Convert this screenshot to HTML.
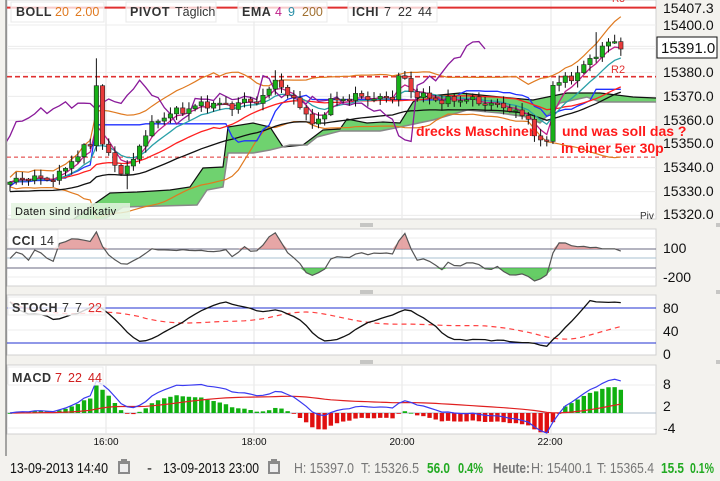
<!DOCTYPE html>
<html><head><meta charset="utf-8">
<style>
html,body{margin:0;padding:0;background:#f3f2ee;}
body{width:720px;height:476px;overflow:hidden;font-family:"Liberation Sans",sans-serif;}
svg text{font-family:"Liberation Sans",sans-serif;}
</style></head>
<body>
<svg id="s" width="720" height="476" viewBox="0 0 720 476" xmlns="http://www.w3.org/2000/svg">
<rect x="0" y="0" width="720" height="476" fill="#f3f2ee"/>
<rect x="7" y="0" width="649" height="219" fill="#fff" stroke="#d0d0d0"/>
<rect x="7" y="229" width="649" height="57" fill="#fff" stroke="#d0d0d0"/>
<rect x="7" y="295" width="649" height="60" fill="#fff" stroke="#d0d0d0"/>
<rect x="7" y="365" width="649" height="69" fill="#fff" stroke="#d0d0d0"/>
<line x1="6" y1="0" x2="6" y2="456" stroke="#555" stroke-width="1"/>
<g id="grid"></g>
<g id="main"></g>
<g id="ind"></g>
<g stroke="#999" stroke-width="1">
<line x1="360" y1="224" x2="373" y2="224"/><line x1="360" y1="226" x2="373" y2="226"/>
<line x1="360" y1="291" x2="373" y2="291"/><line x1="360" y1="293" x2="373" y2="293"/>
<line x1="360" y1="361" x2="373" y2="361"/><line x1="360" y1="363" x2="373" y2="363"/>
<line x1="716" y1="224" x2="720" y2="224"/><line x1="716" y1="226" x2="720" y2="226"/>
<line x1="716" y1="291" x2="720" y2="291"/><line x1="716" y1="293" x2="720" y2="293"/>
<line x1="716" y1="361" x2="720" y2="361"/><line x1="716" y1="363" x2="720" y2="363"/>
</g>
<g font-size="12.5">
<rect x="11" y="2" width="93" height="20" fill="#fff" fill-opacity="0.75" stroke="#e8e8e8"/>
<text x="16" y="16" font-weight="bold" fill="#333" letter-spacing="0.5">BOLL</text><text x="55" y="16" fill="#e07a20">20</text><text x="75" y="16" fill="#e07a20">2.00</text>
<rect x="126" y="2" width="90" height="20" fill="#fff" fill-opacity="0.75" stroke="#e8e8e8"/>
<text x="130" y="16" font-weight="bold" fill="#333" letter-spacing="0.5">PIVOT</text><text x="175" y="16" fill="#333">Täglich</text>
<rect x="238" y="2" width="89" height="20" fill="#fff" fill-opacity="0.75" stroke="#e8e8e8"/>
<text x="242" y="16" font-weight="bold" fill="#333" letter-spacing="0.5">EMA</text><text x="275" y="16" fill="#c0208a">4</text><text x="288" y="16" fill="#2a90a8">9</text><text x="302" y="16" fill="#a07030">200</text>
<rect x="348" y="2" width="89" height="20" fill="#fff" fill-opacity="0.75" stroke="#e8e8e8"/>
<text x="352" y="16" font-weight="bold" fill="#333" letter-spacing="0.5">ICHI</text><text x="384" y="16" fill="#333">7</text><text x="398" y="16" fill="#333">22</text><text x="418" y="16" fill="#333">44</text>
</g>
<text x="612" y="2" font-size="10" fill="#e03030">R3</text>
<text x="611" y="73" font-size="11" fill="#e03030">R2</text>
<text x="640" y="219" font-size="10" fill="#333">Piv</text>
<g font-size="14" font-weight="bold" fill="#ff1a1a">
<text x="416" y="136">drecks Maschinen</text>
<text x="562" y="136">und was soll das ?</text>
<text x="561" y="153">in einer 5er 30p</text>
</g>
<g font-size="12.5">
<rect x="8" y="230" width="50" height="18" fill="#fff" fill-opacity="0.8" stroke="#ececec"/>
<text x="12" y="245" font-weight="bold" fill="#333" letter-spacing="0.5">CCI</text><text x="40" y="245" fill="#333">14</text>
<rect x="8" y="297" width="97" height="18" fill="#fff" fill-opacity="0.8" stroke="#ececec"/>
<text x="12" y="312" font-weight="bold" fill="#333" letter-spacing="0.5">STOCH</text><text x="62" y="312" fill="#333">7</text><text x="75" y="312" fill="#333">7</text><text x="88" y="312" fill="#e03030">22</text>
<rect x="8" y="367" width="95" height="18" fill="#fff" fill-opacity="0.8" stroke="#ececec"/>
<text x="12" y="382" font-weight="bold" fill="#333" letter-spacing="0.5">MACD</text><text x="55" y="382" fill="#d02020">7</text><text x="68" y="382" fill="#d02020">22</text><text x="88" y="382" fill="#d02020">44</text>
</g>
<g font-size="14" fill="#111">
<text x="663" y="13">15407.3</text>
<text x="663" y="30">15400.0</text>
<text x="663" y="77">15380.0</text>
<text x="663" y="101">15370.0</text>
<text x="663" y="125">15360.0</text>
<text x="663" y="148">15350.0</text>
<text x="663" y="172">15340.0</text>
<text x="663" y="196">15330.0</text>
<text x="663" y="219">15320.0</text>
<text x="663" y="253">100</text>
<text x="663" y="282">-200</text>
<text x="663" y="313">80</text>
<text x="663" y="336">40</text>
<text x="663" y="359">0</text>
<text x="663" y="389">8</text>
<text x="663" y="411">2</text>
<text x="663" y="433">-4</text>
</g>
<rect x="657" y="37" width="60" height="21" fill="#fff" stroke="#111"/>
<text x="661" y="53" font-size="15" fill="#111">15391.0</text>
<g font-size="10" fill="#111" text-anchor="middle">
<text x="106" y="445">16:00</text><text x="254" y="445">18:00</text><text x="402" y="445">20:00</text><text x="550" y="445">22:00</text>
</g>
<g font-size="15" fill="#111">
<text x="10" y="473" textLength="98" lengthAdjust="spacingAndGlyphs">13-09-2013 14:40</text>
<text x="147" y="473">-</text>
<text x="163" y="473" textLength="96" lengthAdjust="spacingAndGlyphs">13-09-2013 23:00</text>
<text x="294" y="473" fill="#777" textLength="60" lengthAdjust="spacingAndGlyphs">H: 15397.0</text>
<text x="361" y="473" fill="#777" textLength="58" lengthAdjust="spacingAndGlyphs">T: 15326.5</text>
<text x="427" y="473" fill="#22aa22" font-weight="bold" textLength="23" lengthAdjust="spacingAndGlyphs">56.0</text>
<text x="458" y="473" fill="#22aa22" font-weight="bold" textLength="25" lengthAdjust="spacingAndGlyphs">0.4%</text>
<text x="493" y="473" fill="#777" font-weight="bold" textLength="37" lengthAdjust="spacingAndGlyphs">Heute:</text>
<text x="531" y="473" fill="#777" textLength="61" lengthAdjust="spacingAndGlyphs">H: 15400.1</text>
<text x="597" y="473" fill="#777" textLength="57" lengthAdjust="spacingAndGlyphs">T: 15365.4</text>
<text x="661" y="473" fill="#22aa22" font-weight="bold" textLength="23" lengthAdjust="spacingAndGlyphs">15.5</text>
<text x="690" y="473" fill="#22aa22" font-weight="bold" textLength="24" lengthAdjust="spacingAndGlyphs">0.1%</text>
</g>
<g fill="#8a8a8a">
<rect x="118" y="461" width="12" height="13"/><rect x="120" y="464" width="8" height="8" fill="#eee"/><rect x="121" y="459" width="6" height="3"/>
<rect x="268" y="461" width="12" height="13"/><rect x="270" y="464" width="8" height="8" fill="#eee"/><rect x="271" y="459" width="6" height="3"/>
</g>
<g id="top"></g>
</svg>
<script>
(function(){
var NS="http://www.w3.org/2000/svg";
function el(p,t,a){var e=document.createElementNS(NS,t);for(var k in a)e.setAttribute(k,a[k]);p.appendChild(e);return e;}
var grid=document.getElementById('grid'),main=document.getElementById('main'),ind=document.getElementById('ind');
[106,254,402,551].forEach(function(x){
 [[0,219],[229,286],[295,355],[365,434]].forEach(function(r){el(grid,'line',{x1:x,y1:r[0],x2:x,y2:r[1],stroke:'#e4e4e4'});});
});
function yP(p){return 25+(15400-p)*2.38;}
for(var p=15320;p<=15400;p+=10){el(grid,'line',{x1:7,y1:yP(p),x2:656,y2:yP(p),stroke:'#ececec'});}
el(grid,'line',{x1:7,y1:yP(15391),x2:656,y2:yP(15391),stroke:'#ececec'});
[238,277,330,385,428].forEach(function(y){el(grid,'line',{x1:7,y1:y,x2:656,y2:y,stroke:'#ececec'});});
var kp=[[0,15334],[3,15336],[6,15335],[8,15337],[10,15343],[12,15348],[13,15350],[14,15375],[15,15350],[16,15345],[17,15342],[18,15338],[19,15340],[20,15343],[21,15350],[23,15358],[24,15360],[26,15363],[28,15364],[30,15366],[33,15367],[36,15366],[38,15368],[40,15368],[42,15372],[43,15378],[44,15374],[45,15370],[47,15367],[48,15362],[49,15358],[50,15360],[52,15368],[56,15370],[60,15369],[62,15370],[63,15378],[64,15377],[65,15372],[67,15370],[70,15368],[74,15369],[77,15367],[80,15366],[82,15363],[84,15361],[85,15354],[86,15350],[87,15352],[88,15375],[89,15376],[91,15378],[92,15380],[93,15383],[94,15385],[95,15388],[96,15391],[98,15393],[99,15391]];
var N=100,C=[];
for(var i=0;i<N;i++){for(var j=0;j<kp.length-1;j++){if(i>=kp[j][0]&&i<=kp[j+1][0]){var t=(i-kp[j][0])/(kp[j+1][0]-kp[j][0]||1);C[i]=kp[j][1]+t*(kp[j+1][1]-kp[j][1]);break;}}
 C[i]+=Math.sin(i*1.7)*1.1+Math.sin(i*3.3)*0.7;}
var O=[],H=[],L=[];
for(i=0;i<N;i++){O[i]=i?C[i-1]:C[0]-1;var r1=Math.abs(Math.sin(i*2.1))*2.5+0.4,r2=Math.abs(Math.cos(i*1.3))*2.5+0.4;H[i]=Math.max(O[i],C[i])+r1;L[i]=Math.min(O[i],C[i])-r2;}
H[14]=15386;H[95]=15397;L[86]=15349;L[87]=15349;L[19]=15331;H[43]=15381;
function X(i){return 10+i*6.17;}
function line(arr,col,w,dash,g,yf,st){var d='',m=false;for(var i=0;i<arr.length;i++){if(arr[i]==null||isNaN(arr[i])){m=false;continue;}d+=(m?'L':'M')+X(i+(st||0)).toFixed(1)+' '+yf(arr[i]).toFixed(1);m=true;}var a={d:d,fill:'none',stroke:col,'stroke-width':w||1.2};if(dash)a['stroke-dasharray']=dash;el(g,'path',a);}
function ema(a,n){var k=2/(n+1),r=[],v=a[0];for(var i=0;i<a.length;i++){v=i?a[i]*k+v*(1-k):a[0];r[i]=v;}return r;}
function sma(a,n){var r=[];for(var i=0;i<a.length;i++){var s=0,c=0;for(var j=Math.max(0,i-n+1);j<=i;j++){s+=a[j];c++;}r[i]=s/c;}return r;}
function hl(n,i){var h=-1e9,l=1e9;for(var j=Math.max(0,i-n+1);j<=i;j++){h=Math.max(h,H[j]);l=Math.min(l,L[j]);}return[h,l];}
var cp=el(main,'clipPath',{id:'cm'});el(cp,'rect',{x:7,y:0,width:649,height:219});
var g=el(main,'g',{'clip-path':'url(#cm)'});
var kij=[];for(i=0;i<N;i++){var b=hl(22,i);kij[i]=(b[0]+b[1])/2;}
// hand-drawn cloud
var top=[[70,222],[90,207],[110,193],[137,192],[170,190],[190,187],[203,168],[223,167],[228,127],[253,123],[270,127],[283,147],[303,145],[323,130],[340,129],[347,119],[367,123],[383,122],[400,123],[413,102],[420,97],[460,93],[500,97],[533,100],[567,93],[600,93],[633,97],[656,98]];
var bot=[[656,102],[600,102],[587,97],[560,103],[540,123],[527,117],[500,113],[467,110],[433,120],[400,127],[380,131],[340,131],[317,137],[307,145],[290,145],[270,150],[253,153],[228,153],[223,187],[207,190],[197,205],[123,207],[100,222]];
function pth(a){return a.map(function(p,i){return (i?'L':'M')+p[0]+' '+p[1];}).join('');}
el(g,'path',{d:pth(top)+pth(bot).replace('M','L')+'Z',fill:'#6fd26f'});
el(g,'path',{d:pth(top),fill:'none',stroke:'#111','stroke-width':1.2});
el(g,'path',{d:pth(bot),fill:'none',stroke:'#888','stroke-width':1.5});
el(g,'line',{x1:7,y1:yP(15407.3),x2:656,y2:yP(15407.3),stroke:'#e03030','stroke-width':2});
el(g,'line',{x1:7,y1:yP(15378.3),x2:656,y2:yP(15378.3),stroke:'#e03030','stroke-width':1.6,'stroke-dasharray':'5 3'});
el(g,'line',{x1:7,y1:yP(15344.5),x2:656,y2:yP(15344.5),stroke:'#e03030','stroke-width':1,'stroke-dasharray':'4 3'});
var bm=sma(C,20),bu=[],bl=[];
for(i=0;i<N;i++){var s=0,c2=0;for(j=Math.max(0,i-19);j<=i;j++){s+=(C[j]-bm[i])*(C[j]-bm[i]);c2++;}var sd=Math.sqrt(s/c2);bu[i]=bm[i]+2*sd+2;bl[i]=bm[i]-2*sd-2;}
line(bu,'#e07a20',1.2,null,g,yP);line(bl,'#e07a20',1.2,null,g,yP);
line(ema(C,30).map(function(v,i){return v-4;}),'#111',1.3,null,g,yP);
line(kij,'#2030ff',1.3,null,g,yP);
line(bm,'#ff2020',1.3,null,g,yP);
line(ema(C,9),'#2aa0a8',1.3,null,g,yP);
line(ema(C,4),'#c0208a',1.3,null,g,yP);
line(C.slice(0),'#8a1a9a',1.3,null,g,yP,-22);
for(i=0;i<N;i++){var x=X(i);el(g,'line',{x1:x,y1:yP(H[i]),x2:x,y2:yP(L[i]),stroke:'#111','stroke-width':1});
 var t1=yP(Math.max(O[i],C[i])),t2=yP(Math.min(O[i],C[i]));var hh=Math.max(1.5,t2-t1);
 el(g,'rect',{x:x-2.2,y:t1,width:4.4,height:hh,fill:C[i]>=O[i]?'#18b018':'#e83a3a',stroke:'#222','stroke-width':0.6});}
var tp=[];for(i=0;i<N;i++)tp[i]=(H[i]+L[i]+C[i])/3;var tm=sma(tp,14),cci=[];
for(i=0;i<N;i++){var md=0,c3=0;for(j=Math.max(0,i-13);j<=i;j++){md+=Math.abs(tp[j]-tm[i]);c3++;}md/=c3;cci[i]=md?(tp[i]-tm[i])/(0.015*md):0;}
function yC(v){return Math.max(230,Math.min(285,258.5-v*0.095));}
var c4=el(ind,'g',{});
el(c4,'line',{x1:7,y1:249,x2:656,y2:249,stroke:'#6a6a80'});el(c4,'line',{x1:7,y1:258,x2:656,y2:258,stroke:'#aac0d0'});el(c4,'line',{x1:7,y1:268,x2:656,y2:268,stroke:'#6a6a80'});
var dp='M'+X(0)+' 249',dn='M'+X(0)+' 268';for(i=0;i<N;i++){dp+='L'+X(i).toFixed(1)+' '+Math.min(249,yC(cci[i])).toFixed(1);dn+='L'+X(i).toFixed(1)+' '+Math.max(268,yC(cci[i])).toFixed(1);}
el(c4,'path',{d:dp+'L'+X(N-1)+' 249Z',fill:'#e09090','fill-opacity':0.8});el(c4,'path',{d:dn+'L'+X(N-1)+' 268Z',fill:'#40c040','fill-opacity':0.8});
line(cci,'#555',1.2,null,c4,yC);
var k=[];for(i=0;i<N;i++){var q=hl(14,i);k[i]=q[0]>q[1]?(C[i]-q[1])/(q[0]-q[1])*100:50;}
k=sma(k,7);var ds=sma(k,22);function yS(v){return 354.7-v*0.583;}
el(ind,'line',{x1:7,y1:308,x2:656,y2:308,stroke:'#2030d0'});el(ind,'line',{x1:7,y1:343,x2:656,y2:343,stroke:'#2030d0'});
line(ds,'#ff4040',1.2,'5 4',ind,yS);line(k,'#111',1.3,null,ind,yS);
var m1=ema(C,7),m2=ema(C,22),mc=[],sg;for(i=0;i<N;i++)mc[i]=(m1[i]-m2[i])*0.9;sg=ema(mc,44);
function yM(v){return Math.max(366,Math.min(433,413-v*3.67));}
el(ind,'line',{x1:7,y1:413,x2:656,y2:413,stroke:'#aab8c8'});
for(i=0;i<N;i++){var hv=mc[i]-sg[i];var y0=413,y1=yM(hv);el(ind,'rect',{x:X(i)-2.2,y:Math.min(y0,y1),width:4.4,height:Math.max(0.8,Math.abs(y1-y0)),fill:hv>=0?'#10b010':'#e01010'});}
line(sg,'#e02020',1.2,null,ind,yM);line(mc,'#3a3af0',1.2,null,ind,yM);
// move overlays above chart
var tp2=document.getElementById('top');
el(tp2,'rect',{x:11,y:203,width:119,height:16,fill:'#e4f4e0','fill-opacity':0.85});
})();
</script>
<svg width="720" height="476" style="position:absolute;left:0;top:0" xmlns="http://www.w3.org/2000/svg">
<text x="15" y="215" font-size="11" fill="#111" letter-spacing="0.3" font-family="Liberation Sans, sans-serif">Daten sind indikativ</text>
</svg>
</body></html>
